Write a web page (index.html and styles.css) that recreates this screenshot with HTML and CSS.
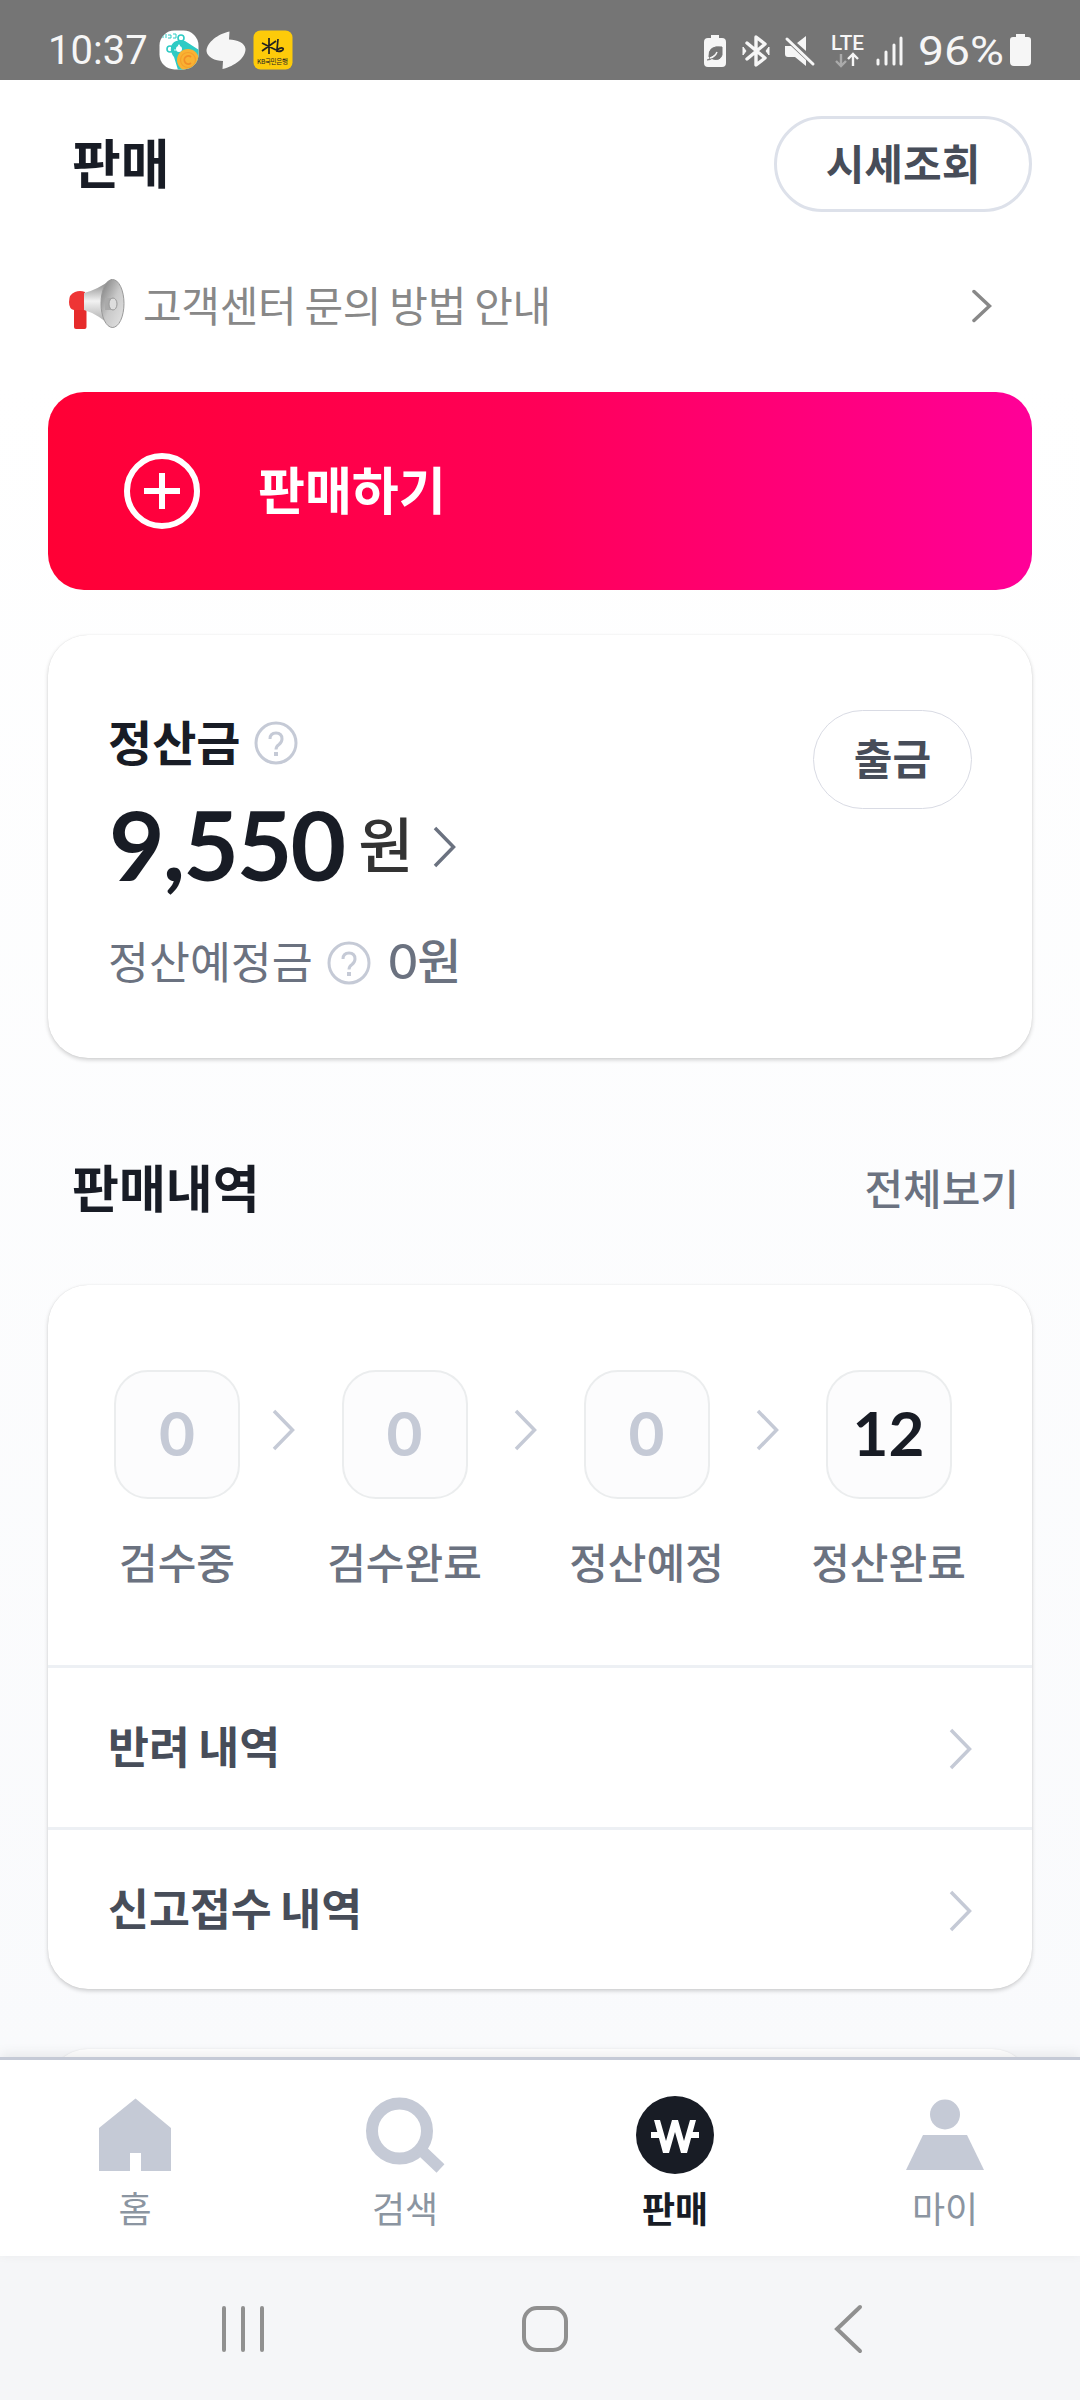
FILE: index.html
```html
<!DOCTYPE html>
<html lang="ko">
<head>
<meta charset="utf-8">
<title>판매</title>
<link rel="stylesheet" href="styles.css">
</head>
<body>
<div class="screen">
  <header class="status">
    <span class="clock">10:37</span>
    <div class="apps">
      <svg width="40" height="40" viewBox="0 0 40 40">
        <defs><clipPath id="bear"><rect width="39" height="39" x="0.5" y="0.5" rx="15"/></clipPath></defs>
        <g clip-path="url(#bear)">
          <rect width="40" height="40" fill="#fff"/>
          <circle cx="11" cy="19" r="3" fill="#fff" stroke="#2ecbc4" stroke-width="1.6"/>
          <circle cx="22" cy="8" r="3" fill="#fff" stroke="#2ecbc4" stroke-width="1.6"/>
          <path d="M12 17C13 12 19 9 26 11L40 20V40H19L15 27Q11 22 12 17Z" fill="#2ecbc4"/>
          <circle cx="20" cy="19" r="3" fill="#fff"/><circle cx="20" cy="15.500" r="1" fill="#fff"/><circle cx="16" cy="20" r=".8" fill="#fff"/>
          <circle cx="29" cy="30" r="11" fill="#f9b233"/>
          <circle cx="29" cy="30" r="7.500" fill="none" stroke="#f5a02b" stroke-width="1.200"/>
          <path d="M32 27a4 4 0 1 0 0 6" fill="none" stroke="#f28f26" stroke-width="1.800"/>
          <path d="M4 4v4M7 4v4M9 5h3v3H9M14 4h3v4h-3" stroke="#2ecbc4" fill="none"/>
        </g>
      </svg>
      <svg width="40" height="40" viewBox="0 0 40 40"><path d="M23.500 1.500C12 4 1 12 .5 21C1 27 9 31 17 31L16.500 39C29 36 39.500 28 39.500 19C39 13 31 9.500 23 9.500Z" fill="#f6f6f6"/></svg>
      <svg width="40" height="40" viewBox="0 0 40 40"><rect x=".5" y=".5" width="39" height="39" rx="7" fill="#fdcb0a"/><path d="M9 13L23 20M9 21L23 11M16 8L16 24M25 9L24 20C32 14 33 23 23 21" fill="none" stroke="#222" stroke-width="1.700"/><text class="kb" x="4" y="34" textLength="31">KB국민은행</text></svg>
    </div>
    <svg class="sys" width="306" height="60" viewBox="0 -13 306 60" fill="#f6f6f6">
      <path d="M7 2h8v3h3q4 0 4 4v21q0 4-4 4H4q-4 0-4-4V9q0-4 4-4h3z"/>
      <path d="M5 24Q4 12 18 14V22Q16 28 9 26ZM3 27Q9 27 13 20" fill="#757575" stroke="#757575" stroke-width="1"/>
      <path d="M6 25Q11 24 13 19" fill="none" stroke="#f6f6f6" stroke-width="1.500"/>
      <path d="M43 10L61 25L52 32V4L61 11L43 26" fill="none" stroke="#f6f6f6" stroke-width="3.400" stroke-linecap="round" stroke-linejoin="round"/>
      <path d="M39 14l3 4l-3 4zM65 14l-3 4l3 4z" stroke="#f6f6f6" stroke-width="1"/>
      <path d="M81 13h6L102 27V33L91 24H84Q81 24 81 21ZM93 10L102 3V18Z"/>
      <path d="M83 6L109 31" stroke="#f6f6f6" stroke-width="3" stroke-linecap="round"/>
      <text class="lte" x="127" y="17" textLength="33" lengthAdjust="spacingAndGlyphs">LTE</text>
      <path d="M137 21v12m-5-5l5 5l5-5" fill="none" stroke="#aaa" stroke-width="2.400"/>
      <path d="M149 33V21m-5 5l5-5l5 5" fill="none" stroke="#f6f6f6" stroke-width="2.400"/>
      <path d="M174 27v4M182 19v12M190 12v19M197 5v26" stroke="#f6f6f6" stroke-width="3" stroke-linecap="round"/>
      <text class="percent" x="214" y="32" textLength="86" lengthAdjust="spacingAndGlyphs">96%</text>
    </svg>
    <svg width="22" height="34" viewBox="0 0 22 34"><path d="M6 1h9v3h3q3 0 3 3v22q0 4-4 4H4q-4 0-4-4V7q0-3 3-3h3z" fill="#f6f6f6"/></svg>
  </header>

  <main class="content">
    <div class="titlebar">
      <h1 class="title">판매</h1>
      <button class="quote">시세조회</button>
    </div>
    <div class="notice">
      <svg width="56" height="52" viewBox="0 0 56 52">
        <defs>
          <linearGradient id="cone" x1="0" y1="0" x2="0" y2="1"><stop offset="0" stop-color="#777"/><stop offset=".45" stop-color="#f2f2f2"/><stop offset="1" stop-color="#999"/></linearGradient>
          <linearGradient id="bell" x1="0" y1="0" x2="1" y2="1"><stop offset="0" stop-color="#777"/><stop offset=".5" stop-color="#c9c9c9"/><stop offset="1" stop-color="#e5e5e5"/></linearGradient>
        </defs>
        <path d="M5 29h12.500v20q0 2-2 2H7q-2 0-2-2z" fill="#e62b2b"/>
        <path d="M6 14q5-2 10 0v18H5Q0 31 0 24q0-8 6-10z" fill="#ee3535"/>
        <path d="M15 15Q28 12 43 1L44 50Q29 36 15 32Z" fill="url(#cone)"/>
        <ellipse cx="43.500" cy="25.500" rx="11.500" ry="24" fill="url(#bell)" stroke="#999"/>
        <path d="M36 20h8v12h-8z" fill="#aaa"/><ellipse cx="44" cy="26" rx="4" ry="6" fill="#ddd" stroke="#999"/>
      </svg>
      <span class="notice-text">고객센터 문의 방법 안내</span>
      <svg width="20" height="34" viewBox="0 0 20 34"><path d="M2 2.500L17.500 17L2 31.500" class="line gray" stroke-linecap="round"/></svg>
    </div>
    <button class="sell">
      <svg width="76" height="76" viewBox="0 0 76 76"><circle cx="38" cy="38" r="35" fill="none" stroke="#fff" stroke-width="6"/><path d="M20 38h36M38 20v36" stroke="#fff" stroke-width="6"/></svg>
      <span>판매하기</span>
    </button>

    <section class="card balance">
      <div class="info">
        <div class="row label"><span>정산금</span>
          <svg class="help" viewBox="0 0 44 44"><circle cx="22" cy="22" r="20"/><path d="M16 18q0-6 6-6t6 6q0 3-3 5.500q-3 2-3 5"/><path d="M22 31v4" stroke-width="4"/></svg>
        </div>
        <div class="row amount"><span class="num">9,550</span><span class="won">원</span>
          <svg class="chev dark" viewBox="0 0 24 42"><path d="M2 2L20.500 21L2 40"/></svg>
        </div>
        <div class="row due"><span>정산예정금</span>
          <svg class="help" viewBox="0 0 44 44"><circle cx="22" cy="22" r="20"/><path d="M16 18q0-6 6-6t6 6q0 3-3 5.500q-3 2-3 5"/><path d="M22 31v4" stroke-width="4"/></svg>
          <span class="zero"><i>0</i>원</span>
        </div>
      </div>
      <button class="withdraw">출금</button>
    </section>

    <div class="section-head"><h2>판매내역</h2><a>전체보기</a></div>

    <section class="card history">
      <div class="steps">
        <div class="step"><b>0</b><span>검수중</span></div>
        <svg class="chev" viewBox="0 0 24 42"><path d="M2 2L20.500 21L2 40"/></svg>
        <div class="step"><b>0</b><span>검수완료</span></div>
        <svg class="chev" viewBox="0 0 24 42"><path d="M2 2L20.500 21L2 40"/></svg>
        <div class="step"><b>0</b><span>정산예정</span></div>
        <svg class="chev" viewBox="0 0 24 42"><path d="M2 2L20.500 21L2 40"/></svg>
        <div class="step"><b class="on">12</b><span>정산완료</span></div>
      </div>
      <div class="item"><span>반려 내역</span><svg class="chev" viewBox="0 0 24 42"><path d="M2 2L20.500 21L2 40"/></svg></div>
      <div class="item"><span>신고접수 내역</span><svg class="chev" viewBox="0 0 24 42"><path d="M2 2L20.500 21L2 40"/></svg></div>
    </section>
    <section class="card next"></section>
  </main>

  <nav class="tabs">
    <div class="tab"><svg width="80" height="80" viewBox="0 0 80 80"><path d="M40.500 3.500L76 33V76H46V58H35V76H4V33Z" fill="#c5cad6"/></svg><span>홈</span></div>
    <div class="tab"><svg width="80" height="80" viewBox="0 0 80 80"><circle cx="34.500" cy="36" r="27.500" fill="none" stroke="#c5cad6" stroke-width="12"/><path d="M55 54L75.500 73.500" stroke="#c5cad6" stroke-width="11.500"/></svg><span>검색</span></div>
    <div class="tab active"><svg width="80" height="80" viewBox="0 0 80 80"><circle cx="40" cy="40" r="39" fill="#181c25"/><path d="M19 25H25L31 46L37 25H43L49 46L55 25H61L52 58H46L40 37L34 58H28Z" fill="#fff"/><path d="M16 40h9M55 40h9" stroke="#fff" stroke-width="6"/></svg><span>판매</span></div>
    <div class="tab"><svg width="80" height="80" viewBox="0 0 80 80" fill="#c5cad6"><circle cx="40" cy="19.500" r="15"/><path d="M18 40H62L79 75H1Z"/></svg><span>마이</span></div>
  </nav>
  <footer class="sysnav">
    <svg width="44" height="50" viewBox="0 0 44 50"><path d="M3 4v42M22 4v42M41 4v42"/></svg>
    <svg class="home" width="50" height="50" viewBox="0 0 50 50"><rect x="4" y="4" width="42" height="42" rx="13"/></svg>
    <svg width="32" height="52" viewBox="0 0 32 52"><path d="M27 4L4 26L27 48"/></svg>
  </footer>
</div>
</body>
</html>
```
FILE: styles.css
```css
* { box-sizing: border-box; margin: 0; padding: 0; }
body { width: 1080px; font-family: "Noto Sans CJK KR", sans-serif; color: #181c25; }
svg { display: block; flex: none; }
button { font: inherit; background: #fff; border: 0; color: #474d59; display: flex; align-items: center; justify-content: center; }
.screen { width: 1080px; height: 2400px; overflow: hidden; display: flex; flex-direction: column; }

.status { height: 80px; flex: none; background: #757575; color: #f6f6f6; display: flex; align-items: center; padding: 20px 48px 0 48px; font: 40px/60px Roboto, sans-serif; }
.clock { width: 111px; padding-top: 1px; }
.apps { display: flex; gap: 7px; }
.sys { margin-left: auto; }
.percent { font: 41px Roboto, sans-serif; }
.kb { font: 6.500px "Noto Sans CJK KR", sans-serif; fill: #222; }
.lte { font: 500 21px Roboto, sans-serif; }

.content { flex: 1; min-height: 0; overflow: hidden; padding: 36px 48px 0; background: linear-gradient(#fff 300px, #f9fafc); }
.titlebar { display: flex; justify-content: space-between; height: 96px; padding-left: 24px; }
.title { font-size: 53px; line-height: 90px; font-weight: 700; }
.quote { width: 258px; border: 3px solid #dde1ea; border-radius: 48px; font-size: 42px; font-weight: 700; line-height: 60px; padding-bottom: 5px; }
.notice { height: 180px; display: flex; align-items: center; padding: 3px 40px 0 21px; }
.notice-text { flex: 1; margin-left: 18px; font-size: 42px; line-height: 60px; color: #888; letter-spacing: -.3px; word-spacing: -3.300px; }
.notice svg:last-child { margin-top: 4px; }
.line { fill: none; stroke-width: 3.500; }
.gray { stroke: #888; }
.sell { width: 984px; height: 198px; border-radius: 36px; background: linear-gradient(90deg, #ff0035, #ff0058 50%, #ff0098); color: #fff; justify-content: flex-start; padding-left: 76px; gap: 58px; font-size: 51px; line-height: 70px; font-weight: 700; }
.sell span { margin-top: -7px; }

.card { background: #fff; border-radius: 40px; box-shadow: 0 2px 4px rgba(0,0,0,.18), 0 0 1px rgba(0,0,0,.12); }
.balance { height: 423px; margin-top: 45px; display: flex; justify-content: space-between; padding: 75px 60px 0 60px; }
.row { display: flex; align-items: center; }
.label { height: 66px; font-size: 48px; line-height: 60px; font-weight: 700; gap: 14px; padding-bottom: 2px; }
.label span, .due span { margin-top: -5px; }
.help { width: 44px; height: 44px; margin-top: 2px; fill: none; stroke: #c5cad6; stroke-width: 3; }
.amount { height: 136px; padding-left: 1px; }
.num { font: 700 96px/110px Lato, sans-serif; letter-spacing: -2px; }
.won { font-size: 60px; line-height: 80px; font-weight: 500; color: #333; margin: -5px 20px 0 14px; }
.amount .chev { margin-top: 6px; }
.chev { width: 24px; height: 42px; fill: none; stroke: #c5cad6; stroke-width: 3.500; }
.dark { stroke: #6b7280; }
.due { height: 100px; font-size: 44.500px; line-height: 60px; color: #6b7280; gap: 14px; margin-top: 0; }
.due .zero { font-size: 48px; font-weight: 500; margin: -6px 0 0 4px; }
.zero i { font: 500 49px/60px Lato, sans-serif; }
.withdraw { width: 159px; height: 99px; border: 1.500px solid #d9dbe4; border-radius: 50px; font-size: 42px; line-height: 60px; font-weight: 700; padding-bottom: 6px; }

.section-head { height: 227px; padding: 30px 13px 0 24px; display: flex; align-items: center; justify-content: space-between; }
h2 { font-size: 51px; line-height: 70px; margin-top: -2px; }
.section-head a { font-size: 42px; line-height: 60px; font-weight: 500; color: #6b7280; }

.history { height: 704px; }
.steps { height: 380px; padding: 85px 0 0 46px; display: flex; }
.step { width: 166px; display: flex; flex-direction: column; align-items: center; }
.step b { width: 126px; height: 129px; border: 2px solid #ebedee; border-radius: 34px; background: #fcfcfd; font: 700 62px/121px Lato, sans-serif; color: #c5cad6; text-align: center; }
.step .on { color: #181c25; }
.step span { font-size: 42px; line-height: 60px; font-weight: 500; color: #6b7280; margin-top: 32px; white-space: nowrap; }
.steps .chev { margin: 39px 25.500px 0 26.500px; }
.steps .step:first-child + .chev { margin-left: 12px; }
.item { height: 162px; border-top: 3px solid #edf0f4; display: flex; align-items: center; justify-content: space-between; padding: 0 59px 0 60px; font-size: 44.500px; line-height: 60px; font-weight: 700; color: #474d59; word-spacing: -4px; }
.item span { margin-top: -6px; }
.item .chev { margin-top: 2px; }
.next { height: 200px; margin-top: 60px; box-shadow: 0 0 2px rgba(0,0,0,.1); }

.tabs { height: 199px; flex: none; display: flex; background: #fff; border-top: 3.500px solid #c5cad6; box-shadow: 0 -3px 12px rgba(0,0,0,.08); position: relative; }
.tab { width: 270px; display: flex; flex-direction: column; align-items: center; padding-top: 35px; font-size: 36px; line-height: 50px; color: #8b95a1; }
.tab span { margin-top: 7px; }
.active { color: #181c25; font-weight: 700; }
.sysnav { height: 144px; flex: none; background: #f5f6f8; display: flex; align-items: center; padding: 2px 215px 0 221px; justify-content: space-between; }
.home { margin-right: 8px; }
.sysnav svg { fill: none; stroke: #909090; stroke-width: 4; stroke-linecap: round; }
```
